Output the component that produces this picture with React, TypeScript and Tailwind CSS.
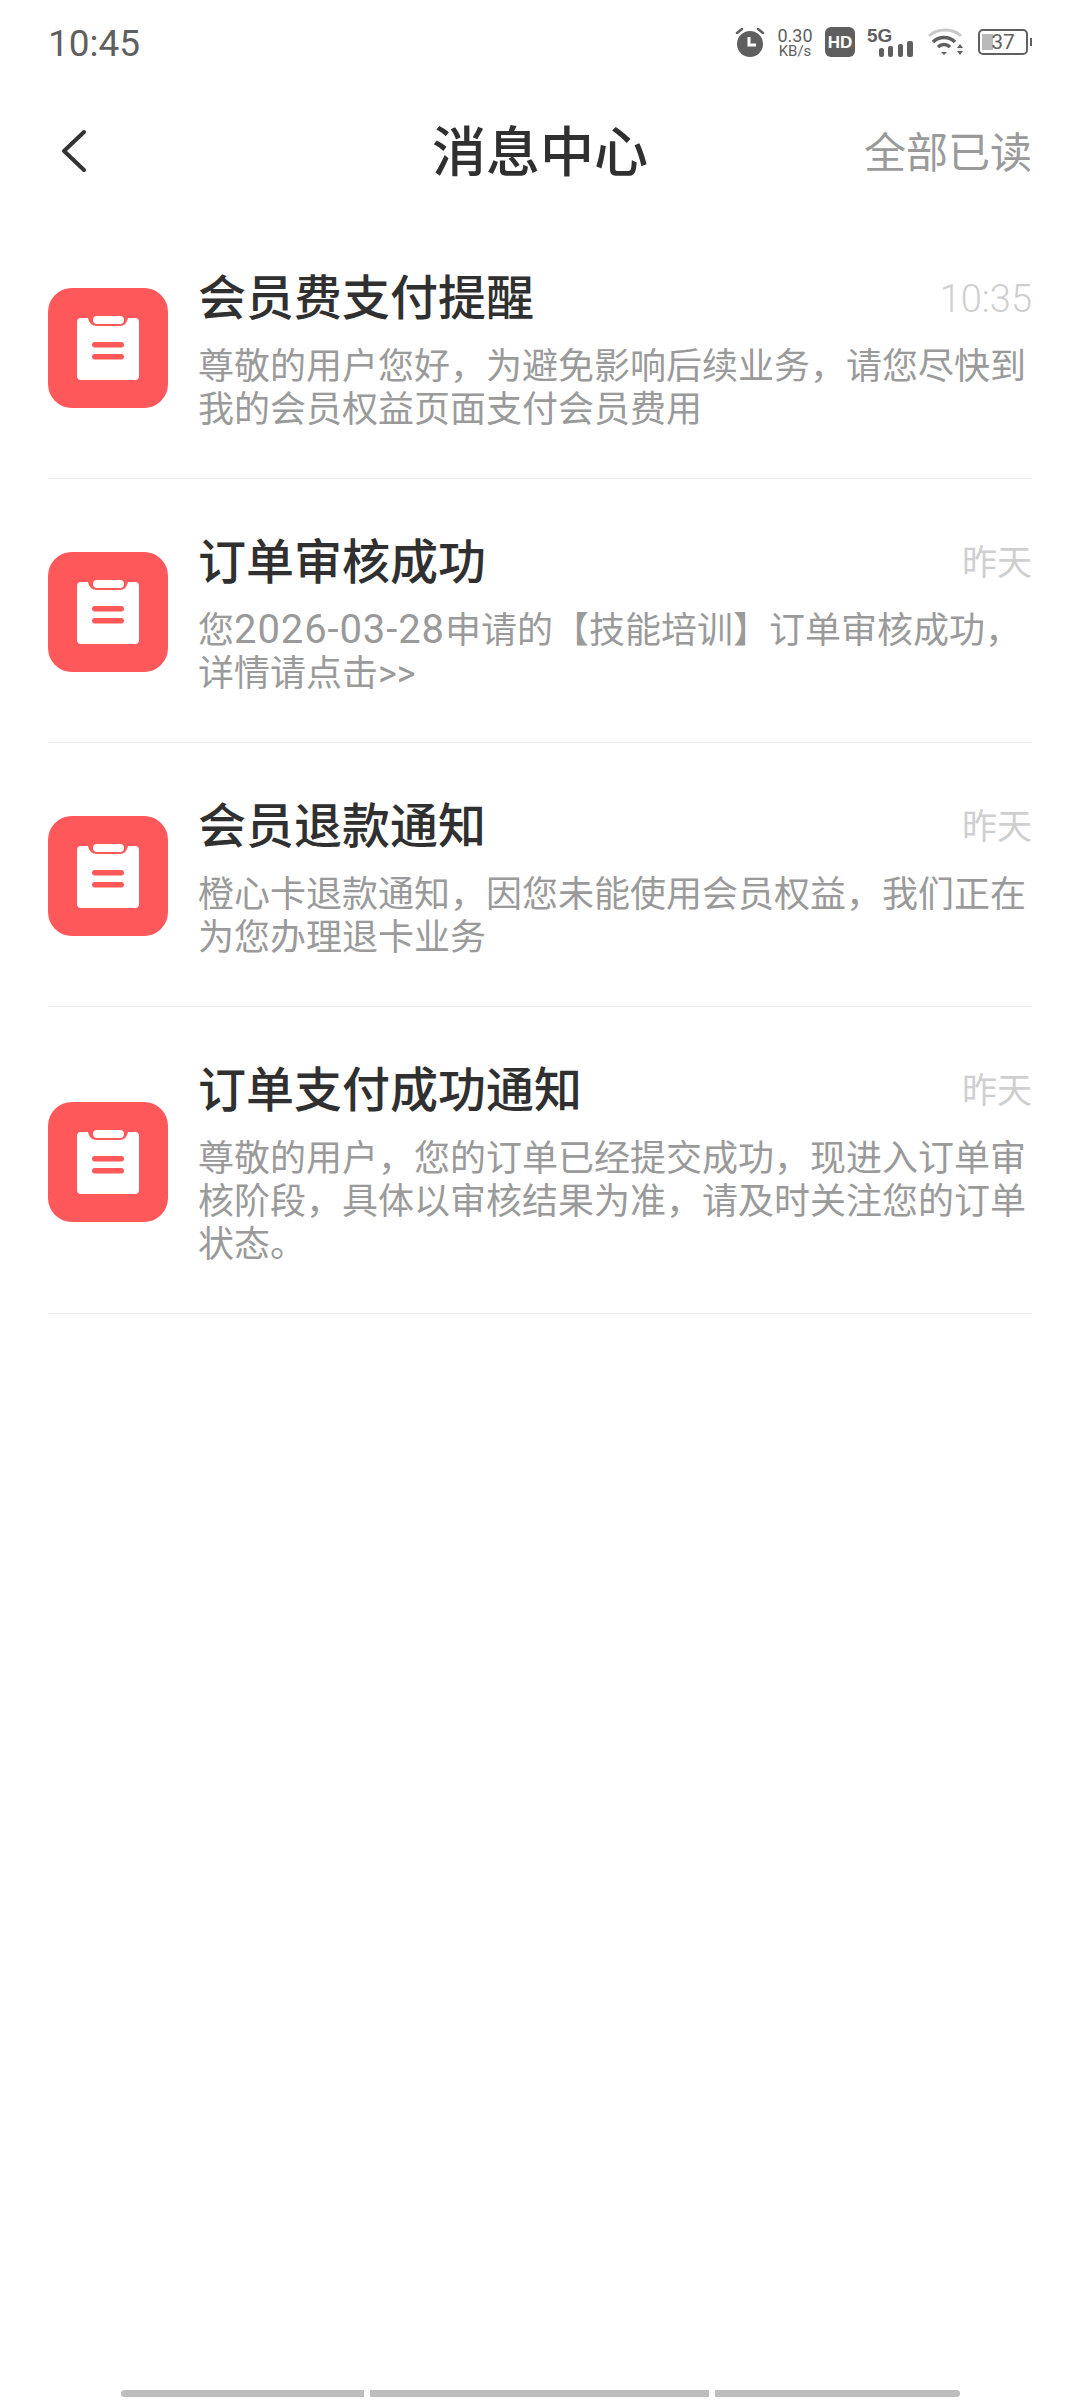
const CJK = "font-['Roboto','Noto_Sans_CJK_SC',sans-serif]";

const MESSAGES = [
  {
    title: '会员费支付提醒',
    time: '10:35',
    body: ['尊敬的用户您好，为避免影响后续业务，请您尽快到', '我的会员权益页面支付会员费用'],
  },
  {
    title: '订单审核成功',
    time: '昨天',
    body: [
      <>
        您<span className="text-[40px] leading-none tracking-[0.9px]">2026-03-28</span>申请的【技能培训】订单审核成功，
      </>,
      '详情请点击>>',
    ],
  },
  {
    title: '会员退款通知',
    time: '昨天',
    body: ['橙心卡退款通知，因您未能使用会员权益，我们正在', '为您办理退卡业务'],
  },
  {
    title: '订单支付成功通知',
    time: '昨天',
    body: ['尊敬的用户，您的订单已经提交成功，现进入订单审', '核阶段，具体以审核结果为准，请及时关注您的订单', '状态。'],
  },
];

function NoteIcon() {
  return (
    <div className="w-[120px] h-[120px] mb-[6px] shrink-0 rounded-[24px] bg-[#ff585b] flex items-center justify-center">
      <svg width="62" height="64" viewBox="0 0 62 64">
        <path
          d="M4 2h7c1 5 4 8 9 8h23c4 0 7-3 8-8h7a4 4 0 0 1 4 4v54a4 4 0 0 1-4 4H4a4 4 0 0 1-4-4V6a4 4 0 0 1 4-4z"
          fill="#fff"
        />
        <rect x="16" y="0" width="31" height="8" rx="4" fill="#fff" />
        <rect x="15" y="26" width="32" height="5.500" rx="2.750" fill="#ff585b" />
        <rect x="15" y="38" width="32" height="5.500" rx="2.750" fill="#ff585b" />
      </svg>
    </div>
  );
}

function StatusIcons() {
  return (
    <div className="flex items-center text-[#5f5f5f]">
      {/* alarm */}
      <svg width="30" height="30" viewBox="0 0 30 30" className="mr-[12px]">
        <circle cx="15" cy="17" r="13" fill="#5f5f5f" />
        <path d="M2 6l5-4M28 6l-5-4" stroke="#5f5f5f" strokeWidth="2.500" strokeLinecap="round" />
        <path d="M14 10v8h7" stroke="#fff" strokeWidth="3" fill="none" />
      </svg>
      <div className="w-[36px] mr-[12px] flex flex-col items-center font-['Roboto',sans-serif] text-[18px] leading-[17px]">
        <span>0.30</span>
        <span className="text-[15px] leading-[14px]">KB/s</span>
      </div>
      {/* HD */}
      <div className="w-[30px] h-[30px] mr-[12px] rounded-[6px] bg-[#5f5f5f] flex items-center justify-center text-white font-['Liberation_Sans',sans-serif] font-bold text-[17px] leading-none">
        HD
      </div>
      {/* 5G + signal */}
      <svg width="46" height="36" viewBox="0 0 46 36" className="-my-[3px] mr-[15px]">
        <text x="0" y="18" fontFamily="Liberation Sans, sans-serif" fontWeight="700" fontSize="19" fill="#5f5f5f">
          5G
        </text>
        <rect x="12" y="24" width="5" height="9" rx="2" fill="#5f5f5f" />
        <rect x="21" y="22" width="5" height="11" rx="2" fill="#5f5f5f" />
        <rect x="31" y="20" width="5" height="13" rx="2" fill="#5f5f5f" />
        <rect x="40" y="17" width="6" height="16" rx="2" fill="#5f5f5f" />
      </svg>
      {/* wifi */}
      <svg width="35" height="30" viewBox="0 0 35 30" className="mr-[15px]">
        <path d="M1 9C9 1 25 1 33 9" stroke="#c9c9c9" strokeWidth="3" fill="none" />
        <path d="M5 15c6-6 16-6 22 0" stroke="#5f5f5f" strokeWidth="3.500" fill="none" />
        <path d="M10 20c3.500-3.500 8.500-3.500 12 0" stroke="#5f5f5f" strokeWidth="3.500" fill="none" />
        <path d="M13 25h6l-3 3z" fill="#5f5f5f" />
        <path d="M29 21l3-4 3 4zM29 24h6l-3 4z" fill="#5f5f5f" />
      </svg>
      {/* battery */}
      <div className="flex items-center">
        <div className="relative w-[50px] h-[26px] rounded-[5px] border-2 border-[#5f5f5f] flex items-center justify-center">
          <div className="absolute left-[2px] top-[3px] bottom-[3px] w-[11px] bg-[#b9b9b9]" />
          <span className="relative font-['Roboto',sans-serif] text-[21px] leading-none">37</span>
        </div>
        <div className="w-[2px] h-[8px] ml-[2px] bg-[#5f5f5f]" />
      </div>
    </div>
  );
}

export default function App() {
  return (
    <div className={`w-[1080px] h-[2400px] bg-white flex flex-col ${CJK}`}>
      {/* Status bar */}
      <div className="h-[84px] px-[48px] flex items-center justify-between">
        <span className="pt-[2px] text-[37px] leading-none text-[#5f5f5f] font-['Roboto',sans-serif]">10:45</span>
        <StatusIcons />
      </div>

      {/* Title bar */}
      <div className="relative h-[131px] pt-[8px] px-[48px] flex items-center justify-between">
        <svg width="40" height="48" viewBox="0 0 40 48" className="ml-[6px] -translate-y-[3px]">
          <path d="M30 5L10 24l20 19" stroke="#333" strokeWidth="4" fill="none" strokeLinecap="round" strokeLinejoin="round" />
        </svg>
        <span className="absolute left-0 right-0 text-center text-[54px] leading-none font-medium text-[#303030]">
          消息中心
        </span>
        <span className="text-[42px] leading-none text-[#9a9a9a]">全部已读</span>
      </div>

      {/* Message list */}
      <div className="px-[48px]">
        {MESSAGES.map((msg) => (
          <div key={msg.title} className="flex items-center border-b border-[#efefef] pt-[55px] pb-[46px] gap-[30px]">
            <NoteIcon />
            <div className="flex-1 min-w-0">
              <div className="flex items-center justify-between h-[58px]">
                <span className="text-[48px] leading-none font-medium text-[#303030]">{msg.title}</span>
                <span className={msg.time === '昨天' ? 'text-[35px] leading-none text-[#cfcfcf]' : 'text-[38px] leading-none font-light text-[#cfcfcf]'}>
                  {msg.time}
                </span>
              </div>
              <div className="mt-[18px] text-[36px] leading-[43px] text-[#9a9a9a]">
                {msg.body.map((line, i) => (
                  <div key={i} className="whitespace-nowrap">{line}</div>
                ))}
              </div>
            </div>
          </div>
        ))}
      </div>

      {/* Bottom indicator */}
      <div className="mt-auto pb-[3px] flex justify-center gap-[6px]">
        <div className="w-[243px] h-[7px] rounded-l-full bg-[#bdbdbd]" />
        <div className="w-[339px] h-[7px] bg-[#bdbdbd]" />
        <div className="w-[245px] h-[7px] rounded-r-full bg-[#bdbdbd]" />
      </div>
    </div>
  );
}
